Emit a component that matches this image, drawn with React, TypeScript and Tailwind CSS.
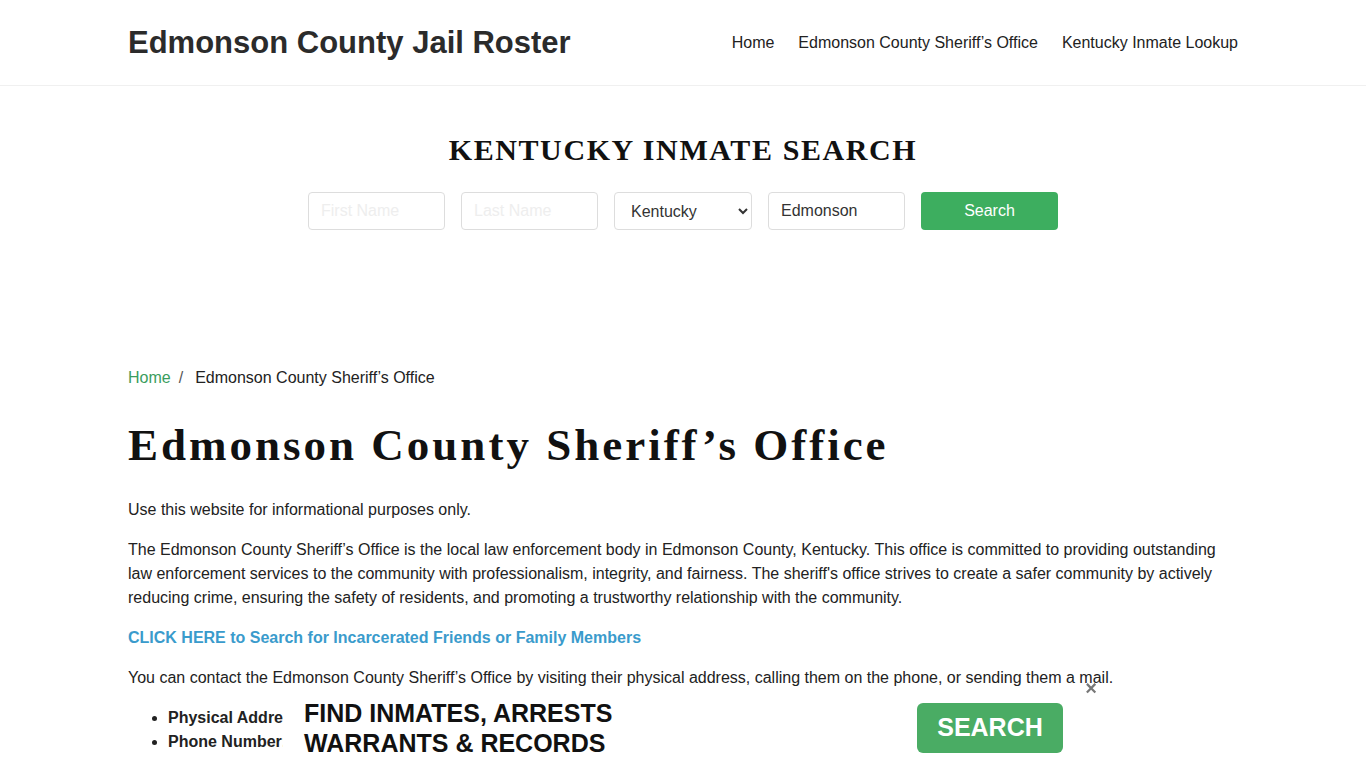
export default function App() {
  return (
    <div className="min-h-screen bg-white text-[#222] font-['Liberation_Sans',Arial,sans-serif]">
      {/* Header */}
      <header className="border-b border-[#f0f0f0]">
        <div className="mx-auto w-[1110px] h-[85px] flex items-center justify-between">
          <a className="text-[31px] font-bold text-[#2b2b2b] leading-none">Edmonson County Jail Roster</a>
          <nav className="flex items-center gap-6 text-[16px] text-[#222]">
            <a>Home</a>
            <a>Edmonson County Sheriff’s Office</a>
            <a>Kentucky Inmate Lookup</a>
          </nav>
        </div>
      </header>

      {/* Search */}
      <section className="pt-[46px] pb-[100px]">
        <h2 className="text-center font-['Liberation_Serif',Georgia,serif] font-bold text-[30px] tracking-[1.6px] leading-[36px] text-[#111]">
          KENTUCKY INMATE SEARCH
        </h2>
        <div className="mt-[24px] flex justify-center gap-4">
          <input className="w-[137px] h-[38px] border border-[#ddd] rounded px-3 text-[16px] placeholder:text-[#eee]" placeholder="First Name" />
          <input className="w-[137px] h-[38px] border border-[#ddd] rounded px-3 text-[16px] placeholder:text-[#eee]" placeholder="Last Name" />
          <select className="w-[138px] h-[38px] border border-[#ddd] rounded px-3 text-[16px] text-[#333] bg-white" defaultValue="Kentucky">
            <option>Kentucky</option>
          </select>
          <input className="w-[137px] h-[38px] border border-[#ddd] rounded px-3 text-[16px] text-[#333]" defaultValue="Edmonson" />
          <button className="w-[137px] h-[38px] rounded bg-[#3dae5f] text-white text-[16px]">Search</button>
        </div>
      </section>

      {/* Content */}
      <main className="mx-auto w-[1110px] pb-24">
        <div className="flex items-center gap-2 text-[16px] leading-6 pt-[36px]">
          <a className="text-[#3a9d5d]">Home</a>
          <span className="text-[#555]">/</span>
          <span className="ml-1">Edmonson County Sheriff’s Office</span>
        </div>
        <h1 className="mt-[30px] font-['Liberation_Serif',Georgia,serif] font-bold text-[45px] tracking-[3px] leading-[50px] text-[#111]">
          Edmonson County Sheriff’s Office
        </h1>
        <div className="mt-[28px] text-[16px] leading-6 space-y-4">
          <p>Use this website for informational purposes only.</p>
          <p>
            The Edmonson County Sheriff’s Office is the local law enforcement body in Edmonson County, Kentucky. This office is committed to providing outstanding law enforcement services to the community with professionalism, integrity, and fairness. The sheriff's office strives to create a safer community by actively reducing crime, ensuring the safety of residents, and promoting a trustworthy relationship with the community.
          </p>
          <p>
            <a className="font-bold text-[#3a9bcc]">CLICK HERE to Search for Incarcerated Friends or Family Members</a>
          </p>
          <p>
            You can contact the Edmonson County Sheriff’s Office by visiting their physical address, calling them on the phone, or sending them a mail.
          </p>
          <ul className="list-disc pl-10 font-bold">
            <li>Physical Address: 110 Main St, Brownsville, KY 42210</li>
            <li>Phone Number: (270) 597-2157</li>
          </ul>
        </div>
      </main>

      {/* Bottom ad bar */}
      <div className="fixed bottom-0 left-[283px] w-[795px] h-[70px] bg-white">
        <button className="absolute -top-[20px] right-[-19px] text-[#777] text-[20px] leading-none font-bold">×</button>
        <div className="flex items-start justify-between h-full pl-[21px] pr-[15px]">
          <div className="font-bold text-[25px] leading-[30px] text-[#111]">
            <div>FIND INMATES, ARRESTS</div>
            <div>WARRANTS &amp; RECORDS</div>
          </div>
          <button className="mt-[5px] w-[146px] h-[50px] rounded-md bg-[#4aac64] text-white font-bold text-[25px]">SEARCH</button>
        </div>
      </div>
    </div>
  );
}
